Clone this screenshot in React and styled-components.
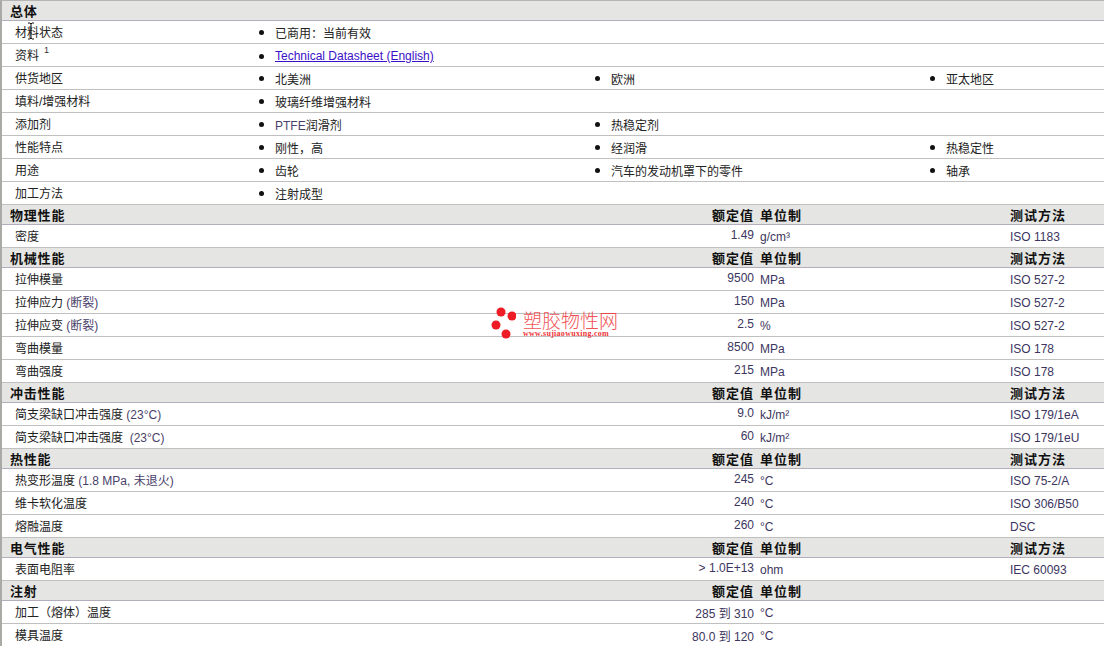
import React from "react";
import styled, { createGlobalStyle } from "styled-components";

const Global = createGlobalStyle`
  html, body { margin: 0; padding: 0; background: #fff; }
  body { width: 1104px; height: 646px; overflow: hidden; font-family: "Liberation Sans", "Noto Sans CJK SC", sans-serif; font-size: 12px; color: #222; }
`;
const Sheet = styled.div`
  position: relative; width: 1104px; height: 646px; overflow: hidden; box-sizing: border-box;
  border-left: 2px solid #a9a9a6; border-top: 1px solid #b5b5b5; padding-left: 0;
`;
const Head = styled.div`
  display: grid; grid-template-columns: 752px 6px 250px 1fr; height: 19px; background: #e5e5e3;
  border-bottom: 1px solid #b4adbd; align-items: center; font-weight: 700; font-size: 13px; color: #111; letter-spacing: 0.8px;
`;
const HeadTitle = styled.div`padding-left: 8px; display: flex; justify-content: space-between; padding-right: 0;`;
const HeadRated = styled.span`letter-spacing: 1px;`;
const Row = styled.div`
  display: grid; grid-template-columns: ${p => (p.$list ? "257px 336px 335px 1fr" : "752px 6px 250px 1fr")};
  height: 22px; border-bottom: 1px solid #c0c0c0; align-items: center; box-sizing: content-box;
`;
const Label = styled.div`padding-left: 13px; position: relative; top: -1px; color: #222; white-space: nowrap; display: flex; justify-content: space-between;`;
const LabelText = styled.span``;
const Note = styled.span`color: #4a3f6a;`;
const Sup = styled.sup`font-size: 9px; line-height: 0; margin-left: 5px; position: relative; top: -1px; vertical-align: 6px; color: #333;`;
const Rated = styled.span`color: #3c3560; white-space: nowrap; position: relative; top: 1px;`;
const Unit = styled.div`color: #3c3560; white-space: nowrap; position: relative; top: 1px;`;
const Method = styled.div`color: #3c3560; white-space: nowrap; position: relative; top: 1px;`;
const ListCell = styled.div`
  display: flex; align-items: center; gap: 11px; white-space: nowrap; color: #222; position: relative; top: ${p => p.$top || 0}px;
  &::before { content: ""; width: 5px; height: 5px; border-radius: 50%; background: #111; margin-left: 0; flex: none; }
`;
const Link = styled.a`color: #3a10c8; text-decoration: underline;`;
const Cursor = styled.svg`position: absolute; left: 24px; top: 21px; width: 10px; height: 18px;`;
const Mark = styled.div`
  position: absolute; left: 488px; top: 304px; display: flex; gap: 7px; color: #f0343a; pointer-events: none;
`;
const Dots = styled.svg`width: 26px; height: 34px; flex: none;`;
const MarkText = styled.div`display: flex; flex-direction: column; margin-top: 5px;`;
const MarkName = styled.div`font-size: 19px; line-height: 20px; font-weight: 300; letter-spacing: 0; font-family: "Noto Sans CJK SC", sans-serif; opacity: .85;`;
const MarkUrl = styled.div`font-family: "Liberation Serif", serif; font-size: 8px; font-weight: 700; line-height: 8px; letter-spacing: .28px;`;

const Section = ({ title, method = true, rows }) => (
  <>
    <Head>
      <HeadTitle><span>{title}</span><HeadRated>额定值</HeadRated></HeadTitle>
      <span />
      <HeadRated>单位制</HeadRated>
      <HeadRated>{method ? "测试方法" : ""}</HeadRated>
    </Head>
    {rows.map(([label, note, rated, unit, test]) => (
      <Row key={label + (note || "")}>
        <Label>
          <LabelText>{label}{note && <Note>&nbsp;{note}</Note>}</LabelText>
          <Rated>{rated}</Rated>
        </Label>
        <span />
        <Unit>{unit}</Unit>
        <Method>{test}</Method>
      </Row>
    ))}
  </>
);

const general = [
  ["材料状态", ["已商用：当前有效"]],
  ["资料", [<Link key="l">Technical Datasheet (English)</Link>], true],
  ["供货地区", ["北美洲", "欧洲", "亚太地区"]],
  ["填料/增强材料", ["玻璃纤维增强材料"]],
  ["添加剂", [<Note key="p">PTFE<span style={{ color: "#222" }}>润滑剂</span></Note>, "热稳定剂"]],
  ["性能特点", ["刚性，高", "经润滑", "热稳定性"]],
  ["用途", ["齿轮", "汽车的发动机罩下的零件", "轴承"]],
  ["加工方法", ["注射成型"]],
];

export default function App() {
  return (
    <>
      <Global />
      <Sheet>
        <Head><HeadTitle><span>总体</span></HeadTitle></Head>
        {general.map(([label, items, sup]) => (
          <Row $list key={label}>
            <Label><LabelText>{label}{sup && <Sup>1</Sup>}</LabelText></Label>
            {items.map((it, i) => <ListCell key={i} $top={sup ? 1 : 0}>{it}</ListCell>)}
          </Row>
        ))}
        <Section title="物理性能" rows={[["密度", "", "1.49", "g/cm³", "ISO 1183"]]} />
        <Section title="机械性能" rows={[
          ["拉伸模量", "", "9500", "MPa", "ISO 527-2"],
          ["拉伸应力", "(断裂)", "150", "MPa", "ISO 527-2"],
          ["拉伸应变", "(断裂)", "2.5", "%", "ISO 527-2"],
          ["弯曲模量", "", "8500", "MPa", "ISO 178"],
          ["弯曲强度", "", "215", "MPa", "ISO 178"],
        ]} />
        <Section title="冲击性能" rows={[
          ["简支梁缺口冲击强度", "(23°C)", "9.0", "kJ/m²", "ISO 179/1eA"],
          ["简支梁缺口冲击强度 ", "(23°C)", "60", "kJ/m²", "ISO 179/1eU"],
        ]} />
        <Section title="热性能" rows={[
          ["热变形温度", "(1.8 MPa, 未退火)", "245", "°C", "ISO 75-2/A"],
          ["维卡软化温度", "", "240", "°C", "ISO 306/B50"],
          ["熔融温度", "", "260", "°C", "DSC"],
        ]} />
        <Section title="电气性能" rows={[["表面电阻率", "", "> 1.0E+13", "ohm", "IEC 60093"]]} />
        <Section title="注射" method={false} rows={[
          ["加工（熔体）温度", "", "285 到  310", "°C", ""],
          ["模具温度", "", "80.0 到  120", "°C", ""],
        ]} />
        <Cursor viewBox="0 0 10 18"><path d="M2 1h2l1 1 1-1h2M5 2v14M2 17h2l1-1 1 1h2" fill="none" stroke="#111" strokeWidth="1" /></Cursor>
        <Mark>
          <Dots viewBox="0 0 26 34">
            <circle cx="11" cy="7" r="4.5" fill="#ee1c25" />
            <circle cx="22" cy="11" r="4.5" fill="#ee1c25" />
            <circle cx="6" cy="20" r="4.5" fill="#ee1c25" />
            <circle cx="16" cy="29" r="4.5" fill="#ee1c25" />
          </Dots>
          <MarkText><MarkName>塑胶物性网</MarkName><MarkUrl>www.sujiaowuxing.com</MarkUrl></MarkText>
        </Mark>
      </Sheet>
    </>
  );
}
